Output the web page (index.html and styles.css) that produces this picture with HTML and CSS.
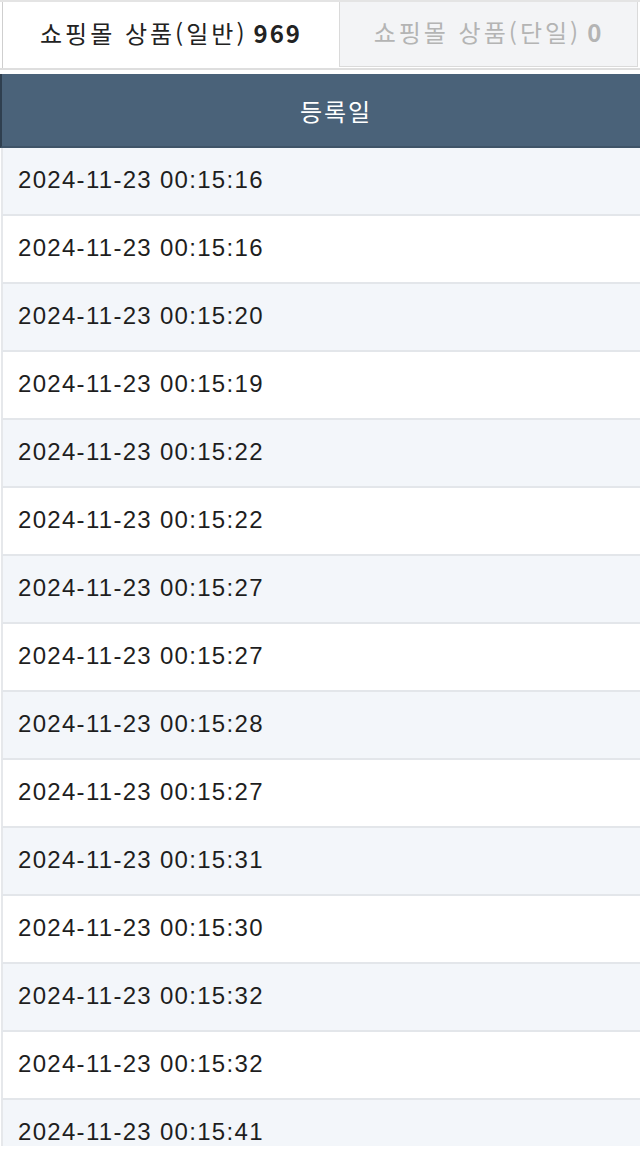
FILE: index.html
```html
<!DOCTYPE html>
<html lang="ko">
<head>
<meta charset="utf-8">
<link rel="stylesheet" href="styles.css">
</head>
<body>
<div class="tabs">
  <div class="tab tab-active">쇼핑몰 상품(일반) <b>969</b></div>
  <div class="tab tab-off">쇼핑몰 상품(단일) <b>0</b></div>
</div>
<div class="grid">
  <div class="head"><span>등록일</span></div>
  <div class="body">
    <div class="row alt">2024-11-23 00:15:16</div>
    <div class="row">2024-11-23 00:15:16</div>
    <div class="row alt">2024-11-23 00:15:20</div>
    <div class="row">2024-11-23 00:15:19</div>
    <div class="row alt">2024-11-23 00:15:22</div>
    <div class="row">2024-11-23 00:15:22</div>
    <div class="row alt">2024-11-23 00:15:27</div>
    <div class="row">2024-11-23 00:15:27</div>
    <div class="row alt">2024-11-23 00:15:28</div>
    <div class="row">2024-11-23 00:15:27</div>
    <div class="row alt">2024-11-23 00:15:31</div>
    <div class="row">2024-11-23 00:15:30</div>
    <div class="row alt">2024-11-23 00:15:32</div>
    <div class="row">2024-11-23 00:15:32</div>
    <div class="row alt">2024-11-23 00:15:41</div>
  </div>
</div>
</body>
</html>
```
FILE: styles.css
```css
html, body {
  margin: 0;
  padding: 0;
  background: #fff;
}
body {
  font-family: "Noto Sans CJK KR", "Noto Sans", sans-serif;
  width: 640px;
  height: 1157px;
  overflow: hidden;
}
.tabs {
  display: flex;
  border-top: 2px solid #e4e4e4;
  border-bottom: 2px solid #dedede;
  box-sizing: border-box;
  height: 70px;
}
.tab {
  display: flex;
  align-items: center;
  justify-content: center;
  font-size: 24px;
  letter-spacing: 3px;
  box-sizing: border-box;
  padding-bottom: 6px;
}
.tab b {
  margin-left: 6px;
  font-weight: 700;
  letter-spacing: 2px;
}
.tab-active {
  width: 337px;
  margin-left: 2px;
  border-left: 1px solid #cfcfcf;
  background: #fff;
  color: #222;
}
.tab-off {
  width: 299px;
  height: 65px;
  background: #f3f4f6;
  border: 1px solid #dadada;
  border-top: 0;
  color: #b4b4b4;
}
.grid {
  margin-top: 4px;
}
.head {
  height: 74px;
  box-sizing: border-box;
  background: #4a6279;
  border-left: 2px solid #2f3f4f;
  border-bottom: 2px solid #3f5468;
  color: #fff;
  font-size: 24px;
  letter-spacing: 2px;
  display: flex;
  align-items: center;
  justify-content: center;
  padding-left: 30px;
}
.body {
  height: 998px;
  overflow: hidden;
}
.row {
  height: 68px;
  box-sizing: border-box;
  border-bottom: 2px solid #e3e6ea;
  border-left: 2px solid #e6e8eb;
  margin-left: 1px;
  padding-left: 15px;
  display: flex;
  align-items: center;
  padding-bottom: 2px;
  font-family: "Liberation Sans", sans-serif;
  font-size: 24px;
  letter-spacing: 1.3px;
  color: #1e1e1e;
}
.alt {
  background: #f3f6fa;
}
```
